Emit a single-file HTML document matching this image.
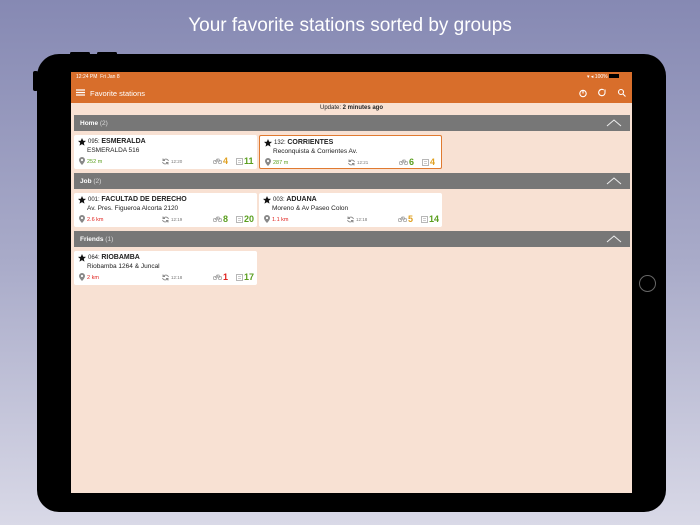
<!DOCTYPE html>
<html><head><meta charset="utf-8"><style>
*{margin:0;padding:0;box-sizing:border-box}
body{width:700px;height:525px;overflow:hidden;position:relative;font-family:"Liberation Sans",sans-serif;background:linear-gradient(#8689b3,#a9abc9 50%,#d9d9e7)}
.t{position:absolute;top:15px;width:700px;text-align:center;color:#fff;font-size:19px}
.frame{position:absolute;left:37px;top:54px;width:629px;height:458px;background:#000;border-radius:22px}
.btn{position:absolute;background:#000}
.scr{position:absolute;left:71px;top:72px;width:561px;height:421px;background:#f8e1d3;overflow:hidden}
.bar{position:absolute;left:0;top:0;width:561px;height:31px;background:#d86e2b;color:#fff}
.sb{position:absolute;top:2px;left:5px;font-size:5px}
.tt{position:absolute;top:17px;left:19px;font-size:7.5px}
.upd{position:absolute;top:33px;width:561px;text-align:center;font-size:6px;color:#222}
.gh{position:absolute;left:3px;width:556px;height:16px;background:#777;color:#fff;font-size:6.5px;font-weight:bold;padding:5px 0 0 6px}
.gh span{font-weight:normal;color:#ddd}
.gh svg{position:absolute;right:8px;top:3px}
.c{position:absolute;width:183px;height:34px;background:#fff;border-radius:2px;font-size:6px;color:#222}
.c.sel{border:1px solid #e07a30}
.c .n{position:absolute;left:14px;top:3px;font-size:6px}
.c .n b{font-size:7px}
.c .a{position:absolute;left:13px;top:12px;font-size:6.5px}
.c .d{position:absolute;left:13px;top:24px;font-size:5.5px}
.c .tm{position:absolute;left:97px;top:24px;font-size:4.5px;color:#777}
.c .bk{position:absolute;left:149px;top:21px;font-size:9px;font-weight:bold}
.c .dk{position:absolute;left:170px;top:21px;font-size:9px;font-weight:bold}
.g{color:#5a9e1e}.r{color:#e0221e}.o{color:#e0a020}
.c svg{position:absolute}
</style></head><body>
<div class="t">Your favorite stations sorted by groups</div>
<div class="btn" style="left:70px;top:52px;width:20px;height:3px;border-radius:2px"></div>
<div class="btn" style="left:97px;top:52px;width:20px;height:3px;border-radius:2px"></div>
<div class="btn" style="left:33px;top:71px;width:5px;height:20px;border-radius:2px"></div>
<div class="frame"></div>
<div style="position:absolute;left:639px;top:275px;width:17px;height:17px;border:1px solid #666;border-radius:50%"></div>
<svg width="0" height="0" style="position:absolute"><defs>
<g id="st"><path d="M4 0l1.2 2.7 2.8.2-2.2 1.9.7 2.8L4 6.1 1.5 7.6l.7-2.8L0 2.9l2.8-.2z" fill="#111"/></g>
<g id="pin"><path d="M3 0a3 3 0 0 1 3 3c0 2-3 5-3 5S0 5 0 3a3 3 0 0 1 3-3z" fill="#888"/><circle cx="3" cy="3" r="1.1" fill="#fff"/></g>
<g id="rf" fill="none" stroke="#888" stroke-width="0.9"><path d="M6.5 3A3 3 0 0 0 1.3 2.2M0.5 4A3 3 0 0 0 5.7 4.8"/><path d="M1 0.5v2h2M6 6.5v-2h-2"/></g>
<g id="bk" fill="none" stroke="#999" stroke-width="0.7"><circle cx="2" cy="4" r="1.7"/><circle cx="7" cy="4" r="1.7"/><path d="M2 4l2-3h2l1 3M4 1l1 3"/></g>
<g id="dk"><rect x="0.5" y="0.5" width="6" height="6" fill="none" stroke="#999" stroke-width="0.7"/><path d="M2 2.5h3M2 4.5h3" stroke="#999" stroke-width="0.6"/></g>
</defs></svg>
<div class="scr">
<div class="bar"><div class="sb">12:24 PM &nbsp;Fri Jan 8</div>
<div class="sb" style="left:516px">▾ ◂ 100% <span style="display:inline-block;width:10px;height:4px;background:#000"></span></div>
<svg style="position:absolute;left:5px;top:17px" width="9" height="7"><path d="M0 1h9M0 3.5h9M0 6h9" stroke="#fff" stroke-width="1.2"/></svg>
<div class="tt">Favorite stations</div>
<svg style="position:absolute;left:508px;top:16px" width="50" height="10" fill="none" stroke="#fff" stroke-width="1.1"><circle cx="4" cy="5.5" r="3.2"/><path d="M4 2v3.5"/><path d="M26 4a3.2 3.2 0 1 1-1.2-2M26 4V1.5M20 6a3.2 3.2 0 0 1 1.2-4"/><circle cx="42" cy="4" r="2.5"/><path d="M44 6l2.5 2.5"/></svg>
</div>
<div class="upd">Update: <b>2 minutes ago</b></div>

<div class="gh" style="top:43px">Home <span>(2)</span><svg width="16" height="9"><path d="M1 8l7-6 7 6" stroke="#eee" fill="none"/></svg></div>
<div class="gh" style="top:101px">Job <span>(2)</span><svg width="16" height="9"><path d="M1 8l7-6 7 6" stroke="#eee" fill="none"/></svg></div>
<div class="gh" style="top:159px">Friends <span>(1)</span><svg width="16" height="9"><path d="M1 8l7-6 7 6" stroke="#eee" fill="none"/></svg></div>

<div class="c" style="left:3px;top:63px"><svg style="left:4px;top:3px" width="8" height="8"><use href="#st"/></svg><div class="n">095: <b>ESMERALDA</b></div><div class="a">ESMERALDA 516</div><svg style="left:5px;top:22px" width="6" height="8"><use href="#pin"/></svg><div class="d g">252 m</div><svg style="left:88px;top:23px" width="7" height="7"><use href="#rf"/></svg><div class="tm">12:20</div><svg style="left:139px;top:23px" width="9" height="6"><use href="#bk"/></svg><div class="bk o">4</div><svg style="left:162px;top:23px" width="7" height="7"><use href="#dk"/></svg><div class="dk g">11</div></div>
<div class="c sel" style="left:188px;top:63px"><svg style="left:4px;top:3px" width="8" height="8"><use href="#st"/></svg><div class="n">132: <b>CORRIENTES</b></div><div class="a">Reconquista &amp; Corrientes Av.</div><svg style="left:5px;top:22px" width="6" height="8"><use href="#pin"/></svg><div class="d g">287 m</div><svg style="left:88px;top:23px" width="7" height="7"><use href="#rf"/></svg><div class="tm">12:21</div><svg style="left:139px;top:23px" width="9" height="6"><use href="#bk"/></svg><div class="bk g">6</div><svg style="left:162px;top:23px" width="7" height="7"><use href="#dk"/></svg><div class="dk o">4</div></div>

<div class="c" style="left:3px;top:121px"><svg style="left:4px;top:3px" width="8" height="8"><use href="#st"/></svg><div class="n">001: <b>FACULTAD DE DERECHO</b></div><div class="a">Av. Pres. Figueroa Alcorta 2120</div><svg style="left:5px;top:22px" width="6" height="8"><use href="#pin"/></svg><div class="d r">2.6 km</div><svg style="left:88px;top:23px" width="7" height="7"><use href="#rf"/></svg><div class="tm">12:19</div><svg style="left:139px;top:23px" width="9" height="6"><use href="#bk"/></svg><div class="bk g">8</div><svg style="left:162px;top:23px" width="7" height="7"><use href="#dk"/></svg><div class="dk g">20</div></div>
<div class="c" style="left:188px;top:121px"><svg style="left:4px;top:3px" width="8" height="8"><use href="#st"/></svg><div class="n">003: <b>ADUANA</b></div><div class="a">Moreno &amp; Av Paseo Colon</div><svg style="left:5px;top:22px" width="6" height="8"><use href="#pin"/></svg><div class="d r">1.1 km</div><svg style="left:88px;top:23px" width="7" height="7"><use href="#rf"/></svg><div class="tm">12:18</div><svg style="left:139px;top:23px" width="9" height="6"><use href="#bk"/></svg><div class="bk o">5</div><svg style="left:162px;top:23px" width="7" height="7"><use href="#dk"/></svg><div class="dk g">14</div></div>

<div class="c" style="left:3px;top:179px"><svg style="left:4px;top:3px" width="8" height="8"><use href="#st"/></svg><div class="n">064: <b>RIOBAMBA</b></div><div class="a">Riobamba 1264 &amp; Juncal</div><svg style="left:5px;top:22px" width="6" height="8"><use href="#pin"/></svg><div class="d r">2 km</div><svg style="left:88px;top:23px" width="7" height="7"><use href="#rf"/></svg><div class="tm">12:18</div><svg style="left:139px;top:23px" width="9" height="6"><use href="#bk"/></svg><div class="bk r">1</div><svg style="left:162px;top:23px" width="7" height="7"><use href="#dk"/></svg><div class="dk g">17</div></div>
</div>
</body></html>
